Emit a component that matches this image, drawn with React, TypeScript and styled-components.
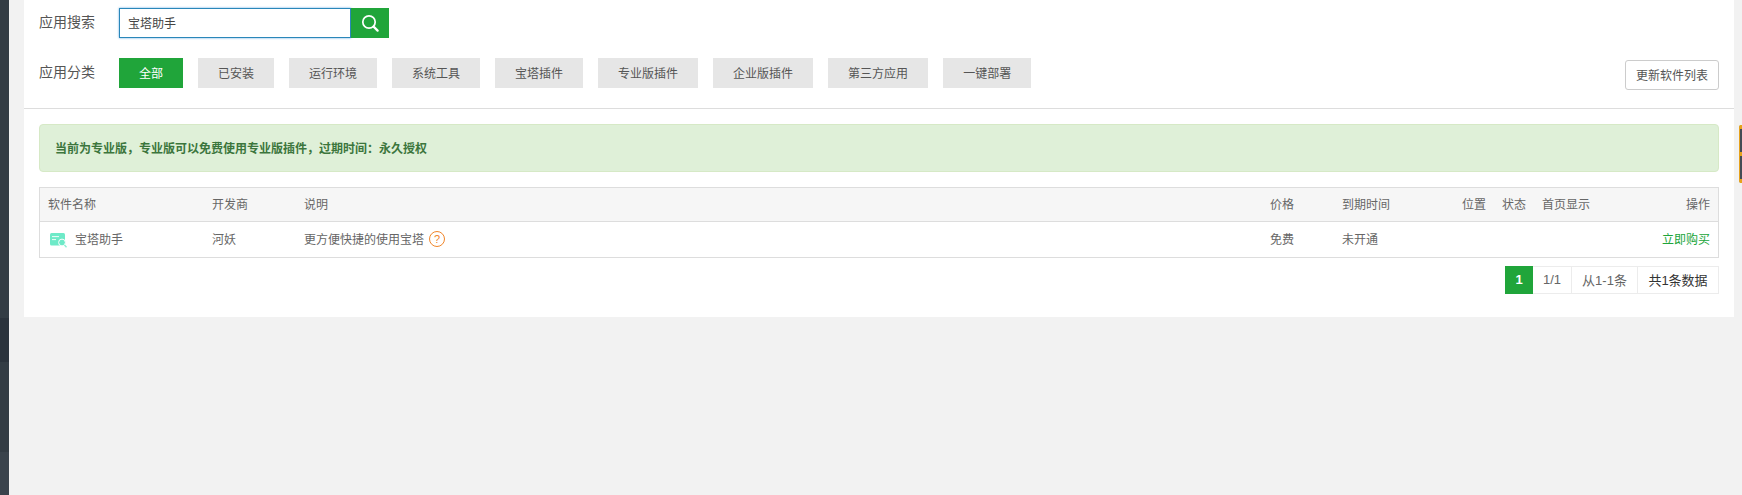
import styled, {createGlobalStyle} from 'styled-components'

const GlobalStyle = createGlobalStyle`
    html, body {
        margin: 0;
        padding: 0;
        height: 495px;
        overflow: hidden;
        background: #f2f2f2;
    }

    body {
        font-family: "Liberation Sans", "Noto Sans CJK SC", sans-serif;
        font-size: 12px;
        color: #666;
    }
`;

const Page = styled.div`
    position: relative;
    display: flex;
    width: 1742px;
    height: 495px;
`;

const Sidebar = styled.div`
    display: flex;
    flex-direction: column;
    width: 9px;
    height: 100%;
    flex-shrink: 0;
`;

const SideItem = styled.div<{ $height: number, $color: string }>`
    height: ${props => props.$height}px;
    background: ${props => props.$color};
`;

const Panel = styled.main`
    box-sizing: border-box;
    width: 1710px;
    height: 317px;
    margin-left: 15px;
    background: #fff;
`;

const Filters = styled.section`
    box-sizing: border-box;
    height: 109px;
    padding: 8px 15px 0;
    border-bottom: 1px solid #ddd;
`;

const SearchRow = styled.div`
    display: flex;
    align-items: center;
    height: 30px;
`;

const CategoryRow = styled.div`
    display: flex;
    justify-content: space-between;
    height: 32px;
    margin-top: 20px;
`;

const Categories = styled.div`
    display: flex;
    align-items: center;
    align-self: flex-start;
    height: 30px;
`;

const Label = styled.span`
    width: 80px;
    margin-bottom: 2px;
    color: #555;
    font-size: 14px;
    line-height: 20px;
`;

const SearchInput = styled.input`
    box-sizing: border-box;
    width: 232px;
    height: 30px;
    padding: 0 8px 2px;
    border: 1px solid #2a87b9;
    outline: none;
    box-shadow: 0 0 2px rgba(80, 160, 225, 0.9);
    color: #444;
    font: 12px "Liberation Sans", "Noto Sans CJK SC", sans-serif;
`;

const SearchButton = styled.button`
    display: flex;
    align-items: center;
    justify-content: center;
    width: 38px;
    height: 30px;
    padding: 0;
    border: 0;
    background: #20a53a;
`;

const Tab = styled.button<{ $active?: boolean }>`
    height: 30px;
    margin-right: 15px;
    padding: 0 20px 2px;
    border: 0;
    background: ${props => props.$active ? '#20a53a' : '#e6e6e6'};
    color: ${props => props.$active ? '#fff' : '#555'};
    font: 12px "Liberation Sans", "Noto Sans CJK SC", sans-serif;
`;

const RefreshButton = styled.button`
    box-sizing: border-box;
    align-self: flex-end;
    width: 94px;
    height: 30px;
    padding: 0 0 2px;
    border: 1px solid #ccc;
    border-radius: 3px;
    background: #fff;
    color: #555;
    font: 12px "Liberation Sans", "Noto Sans CJK SC", sans-serif;
`;

const Content = styled.section`
    padding: 15px 15px 0;
`;

const Notice = styled.div`
    box-sizing: border-box;
    display: flex;
    align-items: center;
    height: 48px;
    padding: 0 15px 2px;
    border: 1px solid #d6e9c6;
    border-radius: 4px;
    background: #dff0d8;
    color: #3c763d;
    font-weight: 700;
`;

const Table = styled.table`
    box-sizing: border-box;
    width: 100%;
    margin-top: 15px;
    border: 1px solid #ddd;
    border-collapse: separate;
    border-spacing: 0;
    table-layout: fixed;
`;

const Column = styled.col<{ $width?: number }>`
    width: ${props => props.$width ? `${props.$width}px` : 'auto'};
`;

const HeadCell = styled.th<{ $right?: boolean }>`
    height: 31px;
    padding: 0 8px 2px;
    border-bottom: 1px solid #ddd;
    background: #f6f6f6;
    color: #666;
    font-weight: 400;
    text-align: ${props => props.$right ? 'right' : 'left'};
    white-space: nowrap;
`;

const BodyCell = styled.td<{ $right?: boolean }>`
    height: 33px;
    padding: 0 8px 2px;
    color: #666;
    text-align: ${props => props.$right ? 'right' : 'left'};
    white-space: nowrap;
`;

const NameWrap = styled.div`
    display: flex;
    align-items: center;
    gap: 8px;
    padding-left: 2px;

    svg {
        margin-top: 3px;
    }
`;

const Description = styled.div`
    display: flex;
    align-items: center;
    gap: 5px;
`;

const HelpMark = styled.span`
    box-sizing: border-box;
    display: flex;
    align-items: center;
    justify-content: center;
    width: 16px;
    height: 16px;
    margin-top: 1px;
    border: 1px solid #f0862b;
    border-radius: 50%;
    color: #f0862b;
    font: 11px/1 "Liberation Sans", sans-serif;
`;

const BuyLink = styled.a`
    color: #20a53a;
`;

const Pager = styled.nav`
    display: flex;
    justify-content: flex-end;
    margin-top: 8px;
`;

const PageItem = styled.span<{ $width: number, $active?: boolean, $dark?: boolean }>`
    box-sizing: border-box;
    display: flex;
    align-items: center;
    justify-content: center;
    width: ${props => props.$width}px;
    height: 28px;
    padding-bottom: 2px;
    border: 1px solid ${props => props.$active ? '#20a53a' : '#ececec'};
    border-left-width: ${props => props.$active ? 1 : 0}px;
    background: ${props => props.$active ? '#20a53a' : '#fff'};
    color: ${props => props.$active ? '#fff' : props.$dark ? '#333' : '#666'};
    font-size: 13px;
    font-weight: ${props => props.$active ? 700 : 400};
`;

const SelectionEdge = styled.div`
    position: absolute;
    top: 125px;
    right: 0;
    display: flex;
    flex-direction: column;
    justify-content: space-between;
    width: 2px;
    height: 58px;
    border-left: 1px solid #e6a21c;
    border-radius: 2px 0 0 2px;
    background: #444b55;
`;

const SelectionHandle = styled.span`
    display: block;
    height: 4px;
    background: #e6a21c;
`;

const categories = ['全部', '已安装', '运行环境', '系统工具', '宝塔插件', '专业版插件', '企业版插件', '第三方应用', '一键部署'];

const sideItems = [
    {height: 318, color: '#333c44'},
    {height: 44, color: '#2b333c'},
    {height: 90, color: '#333c44'},
    {height: 43, color: '#3a434c'},
];

const columns = [164, 92, undefined, 72, 120, 40, 40, 80, 104];

function SearchIcon() {
    return (
        <svg width="18" height="18" viewBox="0 0 18 18" fill="none" stroke="#fff" strokeWidth="1.7">
            <circle cx="8" cy="8" r="6.2"/>
            <path d="M12.6 12.6 L16.6 16.6" strokeLinecap="round" strokeWidth="2.2"/>
        </svg>
    )
}

function PluginIcon() {
    return (
        <svg width="17" height="15" viewBox="0 0 17 15">
            <rect x="0" y="0" width="15" height="12.5" rx="1.5" fill="#6eeac8"/>
            <rect x="2" y="3" width="7" height="1.1" fill="#e4fbf4"/>
            <rect x="2" y="6" width="4" height="1.1" fill="#e4fbf4"/>
            <circle cx="12" cy="9.5" r="3.4" fill="#6eeac8" stroke="#fff" strokeWidth="1"/>
            <path d="M14.5 12 L16.5 14.3" stroke="#8defd4" strokeWidth="1.3"/>
        </svg>
    )
}

export default function App() {
    return (
        <Page>
            <GlobalStyle/>
            <Sidebar>
                {sideItems.map((item, index) => (
                    <SideItem key={index} $height={item.height} $color={item.color}/>
                ))}
            </Sidebar>
            <Panel>
                <Filters>
                    <SearchRow>
                        <Label>应用搜索</Label>
                        <SearchInput defaultValue="宝塔助手"/>
                        <SearchButton><SearchIcon/></SearchButton>
                    </SearchRow>
                    <CategoryRow>
                        <Categories>
                            <Label>应用分类</Label>
                            {categories.map((name, index) => (
                                <Tab key={name} $active={index === 0}>{name}</Tab>
                            ))}
                        </Categories>
                        <RefreshButton>更新软件列表</RefreshButton>
                    </CategoryRow>
                </Filters>
                <Content>
                    <Notice>当前为专业版，专业版可以免费使用专业版插件，过期时间：永久授权</Notice>
                    <Table>
                        <colgroup>
                            {columns.map((width, index) => <Column key={index} $width={width}/>)}
                        </colgroup>
                        <thead>
                            <tr>
                                <HeadCell>软件名称</HeadCell>
                                <HeadCell>开发商</HeadCell>
                                <HeadCell>说明</HeadCell>
                                <HeadCell>价格</HeadCell>
                                <HeadCell>到期时间</HeadCell>
                                <HeadCell>位置</HeadCell>
                                <HeadCell>状态</HeadCell>
                                <HeadCell>首页显示</HeadCell>
                                <HeadCell $right>操作</HeadCell>
                            </tr>
                        </thead>
                        <tbody>
                            <tr>
                                <BodyCell>
                                    <NameWrap><PluginIcon/>宝塔助手</NameWrap>
                                </BodyCell>
                                <BodyCell>河妖</BodyCell>
                                <BodyCell>
                                    <Description>更方便快捷的使用宝塔<HelpMark>?</HelpMark></Description>
                                </BodyCell>
                                <BodyCell>免费</BodyCell>
                                <BodyCell>未开通</BodyCell>
                                <BodyCell/>
                                <BodyCell/>
                                <BodyCell/>
                                <BodyCell $right><BuyLink>立即购买</BuyLink></BodyCell>
                            </tr>
                        </tbody>
                    </Table>
                    <Pager>
                        <PageItem $width={28} $active>1</PageItem>
                        <PageItem $width={39}>1/1</PageItem>
                        <PageItem $width={66}>从1-1条</PageItem>
                        <PageItem $width={81} $dark>共1条数据</PageItem>
                    </Pager>
                </Content>
            </Panel>
            <SelectionEdge>
                <SelectionHandle/>
                <SelectionHandle/>
                <SelectionHandle/>
            </SelectionEdge>
        </Page>
    )
}
